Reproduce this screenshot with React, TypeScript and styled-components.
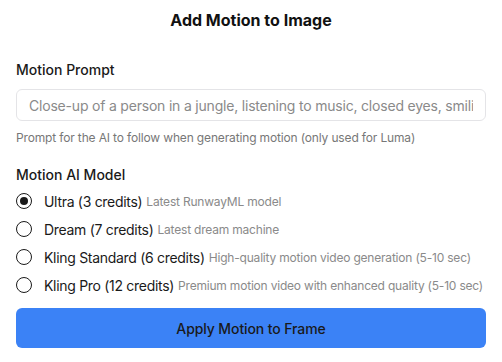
import React, { useState } from "react";
import styled, { createGlobalStyle } from "styled-components";

const GlobalStyle = createGlobalStyle`
  * { box-sizing: border-box; }
  body {
    margin: 0;
    background: #ffffff;
    font-family: Inter, "Noto Sans", sans-serif;
    color: #111111;
  }
`;

interface ModelOption {
  id: string;
  name: string;
  description: string;
}

const models: ModelOption[] = [
  { id: "ultra", name: "Ultra (3 credits)", description: "Latest RunwayML model" },
  { id: "dream", name: "Dream (7 credits)", description: "Latest dream machine" },
  { id: "kling-standard", name: "Kling Standard (6 credits)", description: "High-quality motion video generation (5-10 sec)" },
  { id: "kling-pro", name: "Kling Pro (12 credits)", description: "Premium motion video with enhanced quality (5-10 sec)" },
];

function App() {
  const [selected, setSelected] = useState("ultra");
  const [prompt, setPrompt] = useState("");

  return (
    <>
      <GlobalStyle />
      <Panel>
        <Title>Add Motion to Image</Title>
        <Section $spacing={19}>
          <Label htmlFor="motion-prompt">Motion Prompt</Label>
          <PromptInput
            id="motion-prompt"
            value={prompt}
            onChange={(e) => setPrompt(e.target.value)}
            placeholder="Close-up of a person in a jungle, listening to music, closed eyes, smiling"
          />
          <Hint>Prompt for the AI to follow when generating motion (only used for Luma)</Hint>
        </Section>
        <Section $spacing={13}>
          <GroupLabel>Motion AI Model</GroupLabel>
          <OptionList>
            {models.map((model) => (
              <OptionRow key={model.id}>
                <RadioInput
                  type="radio"
                  name="model"
                  checked={selected === model.id}
                  onChange={() => setSelected(model.id)}
                />
                <OptionName>{model.name}</OptionName>
                <OptionDescription>{model.description}</OptionDescription>
              </OptionRow>
            ))}
          </OptionList>
        </Section>
        <ApplyButton type="button">Apply Motion to Frame</ApplyButton>
      </Panel>
    </>
  );
}

const Panel = styled.div`
  width: 502px;
  padding: 10px 16px 14px;
  display: flex;
  flex-direction: column;
`;

const Title = styled.h2`
  margin: 0 0 30px;
  text-align: center;
  font-size: 16px;
  font-weight: 700;
  line-height: 20px;
  color: #111111;
`;

const Section = styled.div<{ $spacing: number }>`
  display: flex;
  flex-direction: column;
  margin-bottom: ${(props) => props.$spacing}px;
`;

const Label = styled.label`
  font-size: 14px;
  font-weight: 500;
  line-height: 20px;
  margin-bottom: 9px;
  color: #1a1a1a;
`;

const GroupLabel = styled.div`
  font-size: 14px;
  font-weight: 500;
  line-height: 20px;
  margin-bottom: 6px;
  color: #1a1a1a;
`;

const PromptInput = styled.input`
  width: 100%;
  height: 32px;
  padding: 0 12px;
  border: 1px solid #e4e4e7;
  border-radius: 6px;
  font-family: inherit;
  font-size: 14px;
  letter-spacing: -0.2px;
  color: #111111;
  outline: none;

  &::placeholder {
    color: #8a8a8a;
  }
`;

const Hint = styled.p`
  margin: 9px 0 0;
  font-size: 12px;
  line-height: 16px;
  letter-spacing: -0.15px;
  color: #777777;
`;

const OptionList = styled.div`
  display: flex;
  flex-direction: column;
  gap: 8px;
`;

const OptionRow = styled.label`
  display: flex;
  align-items: center;
  height: 20px;
  white-space: nowrap;
  cursor: pointer;
`;

const RadioInput = styled.input`
  appearance: none;
  width: 16px;
  height: 16px;
  margin: 0 12px 0 0;
  border: 1.5px solid #1a1a1a;
  border-radius: 50%;
  display: grid;
  place-items: center;
  flex-shrink: 0;

  &:checked::before {
    content: "";
    width: 8px;
    height: 8px;
    border-radius: 50%;
    background: #1a1a1a;
  }
`;

const OptionName = styled.span`
  font-size: 14px;
  letter-spacing: -0.3px;
  color: #1a1a1a;
  margin-right: 4px;
`;

const OptionDescription = styled.span`
  font-size: 12px;
  letter-spacing: -0.2px;
  color: #8a8a8a;
`;

const ApplyButton = styled.button`
  width: 100%;
  height: 40px;
  border: none;
  border-radius: 6px;
  background: #3b82f6;
  color: #1a1a1a;
  font-family: inherit;
  font-size: 14px;
  font-weight: 500;
  letter-spacing: -0.1px;
  cursor: pointer;
`;

export default App;
